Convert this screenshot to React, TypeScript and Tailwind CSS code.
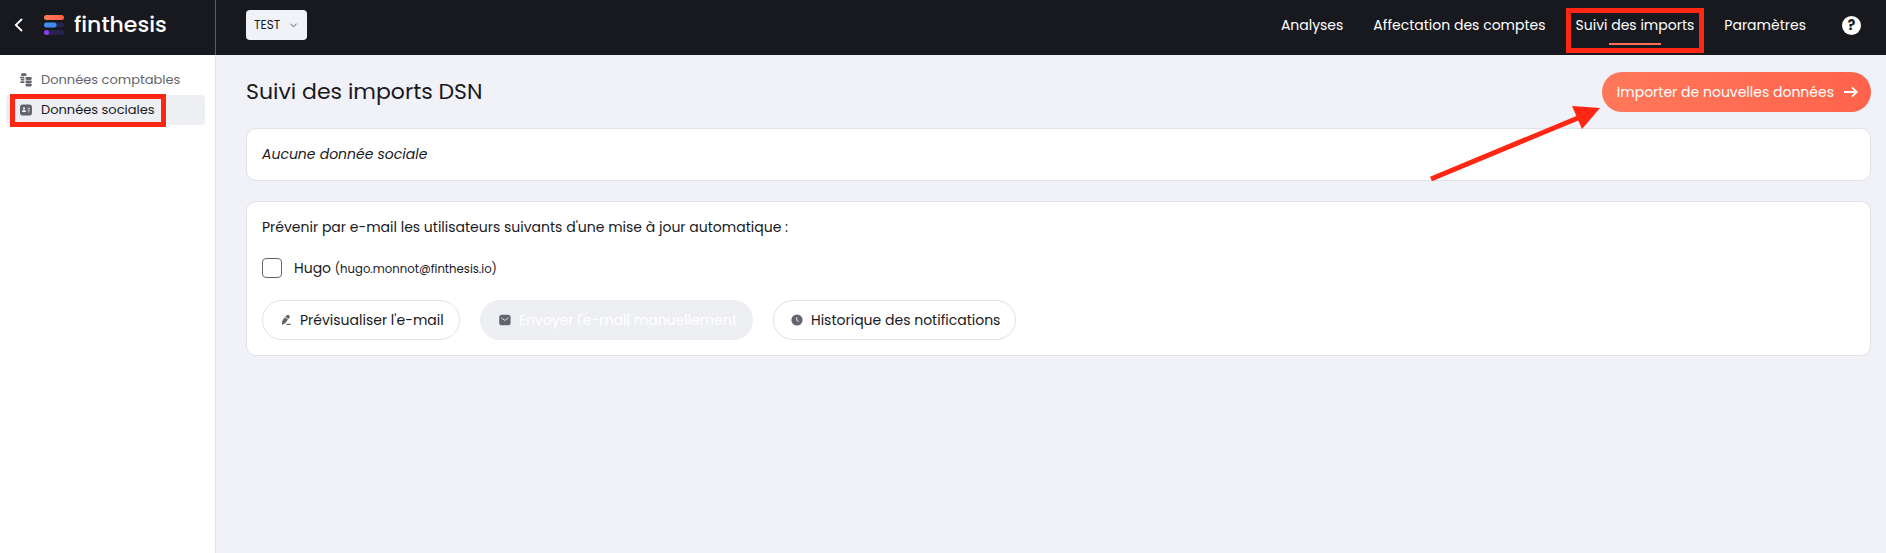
import React from "react";

function Logo() {
  return (
    <a href="#" className="flex items-center gap-[10px] text-white">
      <svg width="20" height="20" viewBox="0 0 20 20" aria-hidden="true">
        <defs>
          <linearGradient id="logo-bar" x1="0" x2="1">
            <stop offset="0" stopColor="#ff7a5c" />
            <stop offset="1" stopColor="#ff5f45" />
          </linearGradient>
        </defs>
        <rect x="0" y="0" width="20" height="5" rx="2.5" fill="url(#logo-bar)" />
        <rect x="0" y="7.6" width="20" height="5" rx="2.5" fill="#29234f" />
        <rect x="0" y="7.6" width="12.5" height="5" rx="2.5" fill="#3f8cf0" />
        <rect x="0" y="15" width="20" height="5" rx="2.5" fill="#29234f" />
        <circle cx="2.5" cy="17.5" r="2.5" fill="#8a3ff0" />
      </svg>
      <span className="text-[22px] leading-6 font-medium">finthesis</span>
    </a>
  );
}

function CoinsIcon() {
  return (
    <svg width="12" height="14" viewBox="0 0 12 14" fill="#62656d" aria-hidden="true">
      <rect x="1" y="0.2" width="5.6" height="2.8" rx="1.2" />
      <rect x="0" y="3.8" width="4.6" height="1.6" rx="0.8" />
      <rect x="0.6" y="6" width="4" height="1.6" rx="0.8" />
      <rect x="0.2" y="8.2" width="4.4" height="1.8" rx="0.8" />
      <rect x="5.4" y="4" width="6.4" height="3" rx="1.4" />
      <rect x="5.4" y="7.6" width="6.4" height="2.4" rx="1.1" />
      <rect x="5.4" y="10.6" width="6.4" height="2.8" rx="1.3" />
    </svg>
  );
}

function IdCardIcon() {
  return (
    <svg width="12" height="12" viewBox="0 0 12 12" aria-hidden="true">
      <rect x="0" y="0.5" width="12" height="11" rx="2.8" fill="#62656d" />
      <circle cx="4" cy="4.4" r="1.1" fill="#eeeff3" />
      <path d="M2 8c0-1.3.9-1.9 2-1.9s2 .6 2 1.9z" fill="#eeeff3" />
      <path d="M7.4 4.4h2.6M7.4 6.2h2.6M8 7.8h1.4" stroke="#eeeff3" strokeWidth="0.7" />
    </svg>
  );
}

function PenIcon() {
  return (
    <svg width="12" height="12" viewBox="0 0 12 12" fill="#62656d" aria-hidden="true">
      <path d="M6.4 1.4 8.1.7l1.7 1.2-.3 1.9-1.1 1.1L5.4 2.7z" />
      <path d="M4.8 3.2 8 5.4 5.4 9.2 2 10.9l.2-3.8z" />
      <path d="M6.8 9.8h3.8v1.1H6.2z" />
    </svg>
  );
}

function MailIcon() {
  return (
    <svg width="12" height="12" viewBox="0 0 12 12" aria-hidden="true">
      <rect x="0.2" y="0.7" width="11.4" height="10.6" rx="2.6" fill="#62656d" />
      <path d="M2.6 4l2.4 1.9a1.5 1.5 0 0 0 1.8 0L9.2 4" fill="none" stroke="#eeeff3" strokeWidth="0.9" strokeLinecap="round" />
    </svg>
  );
}

function ClockIcon() {
  return (
    <svg width="12" height="12" viewBox="0 0 12 12" aria-hidden="true">
      <circle cx="6" cy="6" r="5.6" fill="#62656d" />
      <path d="M5.8 3.6v2.7l1.6 1" fill="none" stroke="#fff" strokeWidth="0.9" strokeLinecap="round" />
    </svg>
  );
}

function Highlight({ className }: { className: string }) {
  return <span aria-hidden="true" className={"pointer-events-none absolute border-[5px] border-[#ff2713] " + className} />;
}

function Header() {
  return (
    <header className="flex h-[55px] bg-[#18191e] text-white">
      <div className="flex w-[216px] shrink-0 items-center gap-[21px] border-r border-[#5c5e66] pb-[5px] pl-[14px]">
        <button type="button" aria-label="Retour" className="flex">
          <svg width="9" height="14" viewBox="0 0 9 14" fill="none" stroke="#fff" strokeWidth="1.8" aria-hidden="true">
            <path d="M8 1 1.8 7 8 13" />
          </svg>
        </button>
        <Logo />
      </div>
      <div className="flex grow items-center justify-between pr-[25px] pb-[5px] pl-[30px]">
        <button type="button" className="flex h-[30px] items-center gap-[10px] rounded bg-[#f1f2f7] pr-[10px] pl-2 text-xs text-[#18191e]">
          TEST
          <svg width="7" height="5" viewBox="0 0 7 5" fill="none" stroke="#62656d" aria-hidden="true">
            <path d="M.5.7 3.5 4 6.5.7" />
          </svg>
        </button>
        <nav className="flex items-center gap-[30px]">
          <a href="#">Analyses</a>
          <a href="#">Affectation des comptes</a>
          <a href="#" className="relative">
            Suivi des imports
            <span className="absolute top-7 left-1/2 h-[2px] w-[52px] -translate-x-1/2 bg-[#ff6f55]" />
            <Highlight className="-inset-x-[10px] -top-[7px] h-[45px]" />
          </a>
          <a href="#">Paramètres</a>
          <button type="button" aria-label="Aide" className="ml-[6px] flex size-[19px] items-center justify-center rounded-full bg-white text-sm leading-5 font-bold text-[#18191e]">
            ?
          </button>
        </nav>
      </div>
    </header>
  );
}

function Sidebar() {
  return (
    <aside className="w-[216px] shrink-0 border-r border-[#dfe2ea] bg-white pt-[10px] pr-[10px] pl-[6px] text-[13px] leading-5">
      <a href="#" className="flex h-[30px] items-center gap-[9px] pl-[14px] text-[#62656d]">
        <CoinsIcon />
        Données comptables
      </a>
      <a href="#" className="relative flex h-[30px] items-center gap-[9px] rounded bg-[#eeeff3] pl-[14px] text-[#18191e]">
        <IdCardIcon />
        Données sociales
        <Highlight className="-top-px left-1 h-[33px] w-[156px]" />
      </a>
    </aside>
  );
}

function Main() {
  return (
    <main className="flex grow flex-col bg-[#f1f2f7] pt-[17px] pr-[15px] pl-[30px]">
      <div className="flex items-center justify-between">
        <h1 className="text-[22px] leading-8">Suivi des imports DSN</h1>
        <div className="relative">
          <button type="button" className="flex h-10 items-center gap-[10px] rounded-full bg-linear-to-r from-[#ff785c] to-[#ff634b] pr-[13px] pl-[15px] leading-5 text-white">
            Importer de nouvelles données
            <svg width="14" height="12" viewBox="0 0 14 12" fill="none" stroke="#fff" strokeWidth="1.8" aria-hidden="true">
              <path d="M0 6h12.5M8 1.3 12.8 6 8 10.7" />
            </svg>
          </button>
          <svg className="pointer-events-none absolute top-8 right-full" width="174" height="80" viewBox="0 0 174 80" aria-hidden="true">
            <path d="M3 75 150 14" stroke="#ff2713" strokeWidth="5" />
            <path d="M172 4 144 2l10 23z" fill="#ff2713" />
          </svg>
        </div>
      </div>
      <section className="mt-4 rounded-[10px] border border-[#dfe2ea] bg-white p-[15px] italic">
        Aucune donnée sociale
      </section>
      <section className="mt-5 rounded-[10px] border border-[#dfe2ea] bg-white p-[15px]">
        <p>Prévenir par e-mail les utilisateurs suivants d'une mise à jour automatique :</p>
        <label className="mt-5 flex h-5 w-fit items-center gap-3 leading-5">
          <input type="checkbox" className="size-5 appearance-none rounded-[4px] border border-[#62656d] bg-white" />
          <span>
            Hugo <small className="[font-size:smaller]">(hugo.monnot@finthesis.io)</small>
          </span>
        </label>
        <div className="mt-[22px] flex gap-5">
          <button type="button" className="flex h-10 items-center gap-2 rounded-full border border-[#dfe2ea] pr-[15px] pl-[17px]">
            <PenIcon />
            Prévisualiser l'e-mail
          </button>
          <button type="button" disabled className="flex h-10 items-center gap-2 rounded-full bg-[#eeeff3] pr-4 pl-[19px] text-white">
            <MailIcon />
            Envoyer l'e-mail manuellement
          </button>
          <button type="button" className="flex h-10 items-center gap-2 rounded-full border border-[#dfe2ea] pr-[15px] pl-[17px]">
            <ClockIcon />
            Historique des notifications
          </button>
        </div>
      </section>
    </main>
  );
}

export default function App() {
  return (
    <div className="flex min-h-screen flex-col font-['Poppins','Inter',sans-serif] text-[14px] leading-[21px] text-[#18191e]">
      <Header />
      <div className="flex grow">
        <Sidebar />
        <Main />
      </div>
    </div>
  );
}
